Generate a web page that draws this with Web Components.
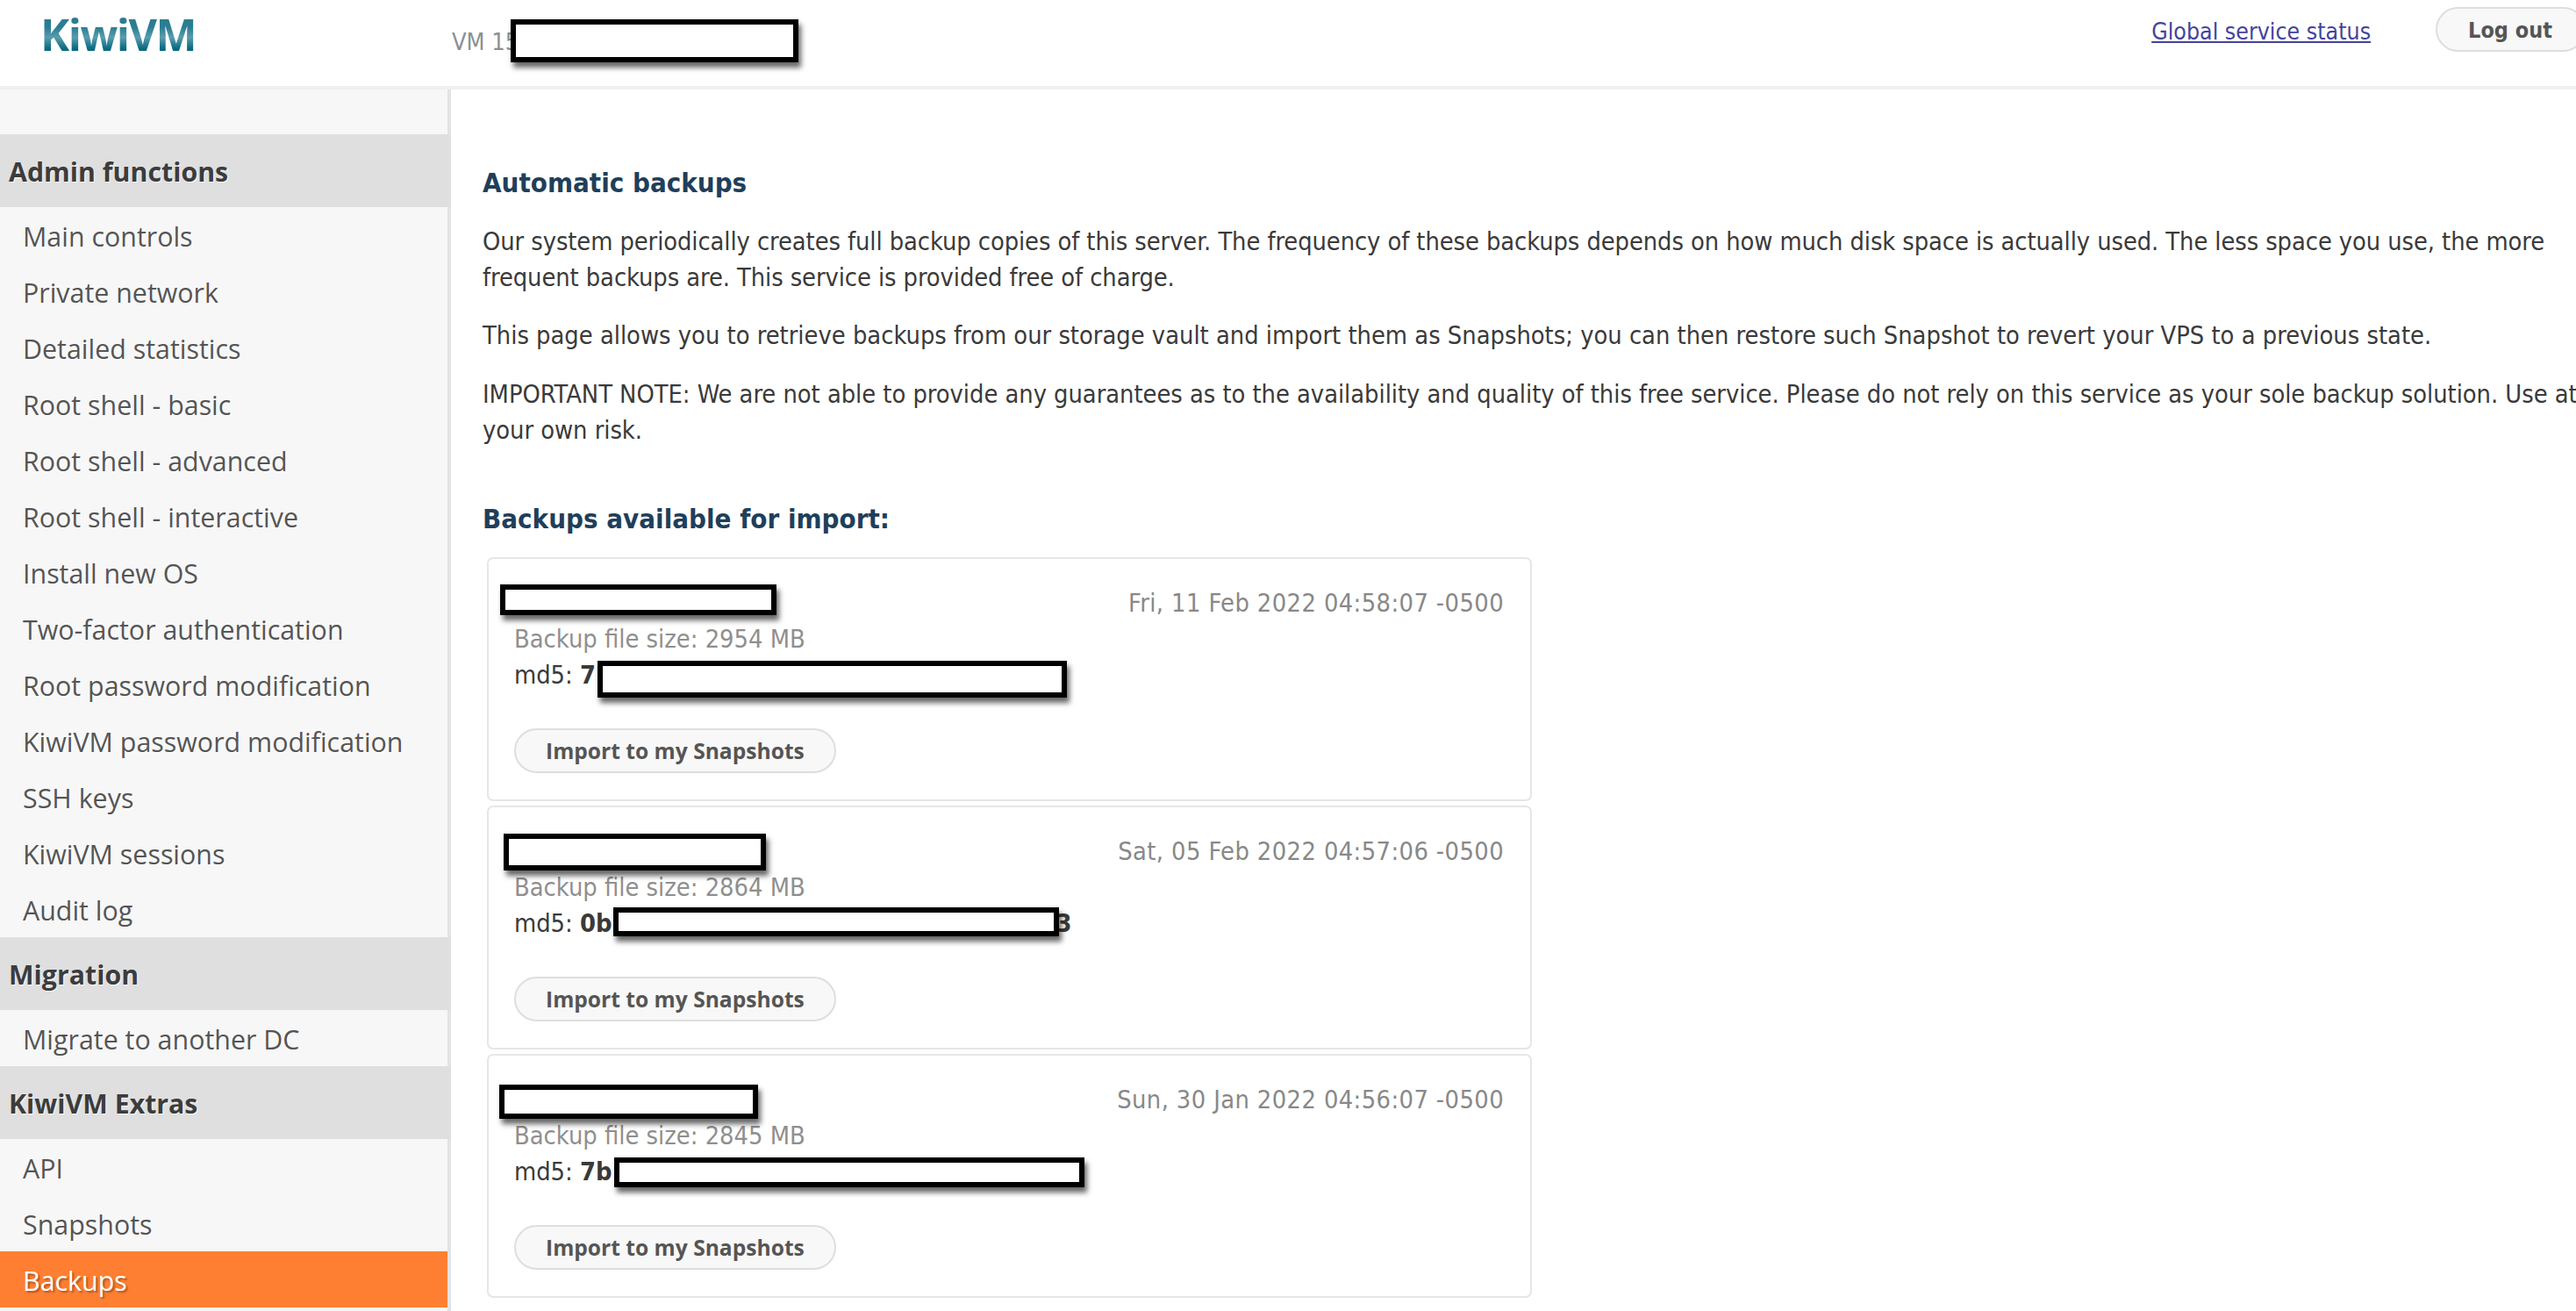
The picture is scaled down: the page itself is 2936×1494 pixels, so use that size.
<!DOCTYPE html>
<html>
<head>
<meta charset="utf-8">
<title>KiwiVM</title>
<style>
    html, body { margin: 0; padding: 0; height: 100%; overflow: hidden; background: #fff; }
    body { font-family: "DejaVu Sans Condensed", "DejaVu Sans", sans-serif; }
</style>
</head>
<body>
<kiwi-page>
    <kiwi-topbar slot="top"></kiwi-topbar>
    <kiwi-sidebar slot="side">
        <side-group label="Admin functions">
            <side-item>Main controls</side-item>
            <side-item>Private network</side-item>
            <side-item>Detailed statistics</side-item>
            <side-item>Root shell - basic</side-item>
            <side-item>Root shell - advanced</side-item>
            <side-item>Root shell - interactive</side-item>
            <side-item>Install new OS</side-item>
            <side-item>Two-factor authentication</side-item>
            <side-item>Root password modification</side-item>
            <side-item>KiwiVM password modification</side-item>
            <side-item>SSH keys</side-item>
            <side-item>KiwiVM sessions</side-item>
            <side-item>Audit log</side-item>
        </side-group>
        <side-group label="Migration">
            <side-item>Migrate to another DC</side-item>
        </side-group>
        <side-group label="KiwiVM Extras">
            <side-item>API</side-item>
            <side-item>Snapshots</side-item>
            <side-item active>Backups</side-item>
        </side-group>
    </kiwi-sidebar>
    <backups-view></backups-view>
</kiwi-page>

<script>
class KiwiPage extends HTMLElement {
    connectedCallback() {
        const shadow = this.attachShadow({ mode: "open" });
        shadow.innerHTML = `
        <style>
            :host { display: block; width: 2960px; height: 1494px; overflow: hidden; }
            .body { display: flex; height: 1392px; }
            ::slotted(kiwi-sidebar) { flex: none; }
        </style>
        <slot name="top"></slot>
        <div class="body">
            <slot name="side"></slot>
            <slot></slot>
        </div>`;
    }
}
customElements.define("kiwi-page", KiwiPage);

class RedactBox extends HTMLElement {
    static get observedAttributes() {
        return ["x", "y", "w", "h"];
    }

    attributeChangedCallback() {
        this.place();
    }

    place() {
        this.style.left = `${this.getAttribute("x")}px`;
        this.style.top = `${this.getAttribute("y")}px`;
        this.style.width = `${this.getAttribute("w")}px`;
        this.style.height = `${this.getAttribute("h")}px`;
    }

    connectedCallback() {
        const shadow = this.attachShadow({ mode: "open" });
        shadow.innerHTML = `
        <style>
            :host {
                display: block;
                position: absolute;
                box-sizing: border-box;
                background: #fff;
                border: 6px solid #000;
                box-shadow: 3px 6px 6px rgba(0, 0, 0, .6);
            }
        </style>`;
        this.place();
    }
}
customElements.define("redact-box", RedactBox);

class PillButton extends HTMLElement {
    connectedCallback() {
        const shadow = this.attachShadow({ mode: "open" });
        shadow.innerHTML = `
        <style>
            :host {
                display: inline-flex;
                align-items: center;
                box-sizing: border-box;
                height: 51px;
                padding: 2px 34px 0;
                background: #f8f8f8;
                border: 2px solid #dedede;
                border-radius: 26px;
                color: #555;
                font: 700 24.6px/1 "Open Sans", sans-serif;
                white-space: nowrap;
            }
        </style>
        <slot></slot>`;
    }
}
customElements.define("pill-button", PillButton);

class KiwiTopbar extends HTMLElement {
    connectedCallback() {
        const shadow = this.attachShadow({ mode: "open" });
        shadow.innerHTML = `
        <style>
            :host {
                display: flex;
                align-items: flex-start;
                position: relative;
                box-sizing: border-box;
                height: 102px;
                background: #fff;
                border-bottom: 4px solid #f0f0f0;
            }
            .logo {
                flex: none;
                width: 469px;
                padding: 9px 0 0 46px;
                font: 700 50px/60px "Open Sans", sans-serif;
                letter-spacing: -1.5px;
                background: linear-gradient(#2f7a8e 20%, #2a7d92 45%, #5a9dad 62%, #0b6a82 80%);
                -webkit-background-clip: text;
                background-clip: text;
                color: transparent;
            }
            .vm { flex: 1; margin-top: 27px; color: #8a8f94; font-size: 27px; line-height: 41px; }
            a { margin-top: 15px; color: #44449b; font-size: 26.5px; line-height: 41px; }
            pill-button {
                margin: 8px 13px 0 74px;
                padding: 2px 36px 0 35px;
                font: 700 25px/1 "DejaVu Sans Condensed", sans-serif;
            }
        </style>
        <div class="logo">KiwiVM</div>
        <div class="vm">VM 15</div>
        <a href="#">Global service status</a>
        <pill-button>Log out</pill-button>
        <redact-box x="582" y="22" w="328" h="49"></redact-box>`;
    }
}
customElements.define("kiwi-topbar", KiwiTopbar);

class KiwiSidebar extends HTMLElement {
    connectedCallback() {
        const shadow = this.attachShadow({ mode: "open" });
        shadow.innerHTML = `
        <style>
            :host {
                display: block;
                box-sizing: border-box;
                width: 514px;
                padding-top: 51px;
                background: #f7f7f7;
                border-right: 4px solid #e3e3e3;
                font-family: "Open Sans", sans-serif;
            }
        </style>
        <slot></slot>`;
    }
}
customElements.define("kiwi-sidebar", KiwiSidebar);

class SideGroup extends HTMLElement {
    connectedCallback() {
        const shadow = this.attachShadow({ mode: "open" });
        shadow.innerHTML = `
        <style>
            :host { display: block; }
            h2 {
                margin: 0 -4px 0 0;
                height: 83px;
                padding-left: 10px;
                background: #dfdfdf;
                color: #3c3c3c;
                font: 700 30.3px/86px "Open Sans", sans-serif;
                text-shadow: 1px 1px 1px rgba(255, 255, 255, .9);
            }
        </style>
        <h2>${this.getAttribute("label")}</h2>
        <slot></slot>`;
    }
}
customElements.define("side-group", SideGroup);

class SideItem extends HTMLElement {
    connectedCallback() {
        const shadow = this.attachShadow({ mode: "open" });
        shadow.innerHTML = `
        <style>
            :host {
                display: block;
                height: 64px;
                padding-left: 26px;
                color: #555;
                font-size: 30.4px;
                line-height: 68px;
                text-shadow: 1px 1px 1px #fff;
                white-space: nowrap;
            }
            :host([active]) {
                background: #ff7f32;
                color: #fff;
                text-shadow: 2px 2px 2px rgba(120, 60, 20, .6);
            }
        </style>
        <slot></slot>`;
    }
}
customElements.define("side-item", SideItem);

class BackupCard extends HTMLElement {
    connectedCallback() {
        const shadow = this.attachShadow({ mode: "open" });
        shadow.innerHTML = `
        <style>
            :host {
                display: block;
                position: relative;
                box-sizing: border-box;
                width: 1191px;
                height: 278px;
                padding: 30px 30px 0 29px;
                margin-bottom: 5px;
                border: 2px solid #e6e6e6;
                border-radius: 7px;
                line-height: 41px;
                color: #3a3a3a;
            }
            .date { text-align: right; color: #888; letter-spacing: .4px; }
            .size { color: #8f8f8f; }
            pill-button { margin-top: 40px; }
            .rest { display: inline-block; }
        </style>
        <div class="date">${this.getAttribute("date")}</div>
        <div class="size">Backup file size: ${this.getAttribute("size")}</div>
        <div>md5: <b>${this.getAttribute("md5")}</b><b class="rest" style="margin-left:${this.getAttribute("tail-at") || 0}px">${this.getAttribute("tail") || ""}</b></div>
        <pill-button>Import to my Snapshots</pill-button>
        <slot></slot>`;
    }
}
customElements.define("backup-card", BackupCard);

class BackupsView extends HTMLElement {
    connectedCallback() {
        const shadow = this.attachShadow({ mode: "open" });
        shadow.innerHTML = `
        <style>
            :host {
                display: block;
                flex: 1;
                box-sizing: border-box;
                padding: 86px 10px 0 36px;
                font-size: 28.75px;
                line-height: 41px;
                color: #3a3a3a;
            }
            h3 { margin: 0; color: #1f3f5b; font-size: 31px; line-height: 41px; }
            p { margin: 0; }
            .a { margin-top: 26px; letter-spacing: -.08px; }
            .b { margin-top: 25px; }
            .c { margin-top: 26px; letter-spacing: -.03px; }
            h3.list { margin: 60px 0 23px; }
            .cards { margin-left: 5px; }
        </style>
        <h3>Automatic backups</h3>
        <p class="a">Our system periodically creates full backup copies of this server. The frequency of these backups depends on how much disk space is actually used. The less space you use, the more frequent backups are. This service is provided free of charge.</p>
        <p class="b">This page allows you to retrieve backups from our storage vault and import them as Snapshots; you can then restore such Snapshot to revert your VPS to a previous state.</p>
        <p class="c">IMPORTANT NOTE: We are not able to provide any guarantees as to the availability and quality of this free service. Please do not rely on this service as your sole backup solution. Use at your own risk.</p>
        <h3 class="list">Backups available for import:</h3>
        <div class="cards">
            <backup-card date="Fri, 11 Feb 2022 04:58:07 -0500" size="2954 MB" md5="7">
                <redact-box x="13" y="29" w="315" h="35"></redact-box>
                <redact-box x="124" y="116" w="535" h="42"></redact-box>
            </backup-card>
            <backup-card date="Sat, 05 Feb 2022 04:57:06 -0500" size="2864 MB" md5="0b" tail="3" tail-at="506">
                <redact-box x="17" y="30" w="299" h="42"></redact-box>
                <redact-box x="142" y="114" w="508" h="33"></redact-box>
            </backup-card>
            <backup-card date="Sun, 30 Jan 2022 04:56:07 -0500" size="2845 MB" md5="7b">
                <redact-box x="12" y="33" w="295" h="39"></redact-box>
                <redact-box x="143" y="116" w="536" h="34"></redact-box>
            </backup-card>
        </div>`;
    }
}
customElements.define("backups-view", BackupsView);
</script>
</body>
</html>
